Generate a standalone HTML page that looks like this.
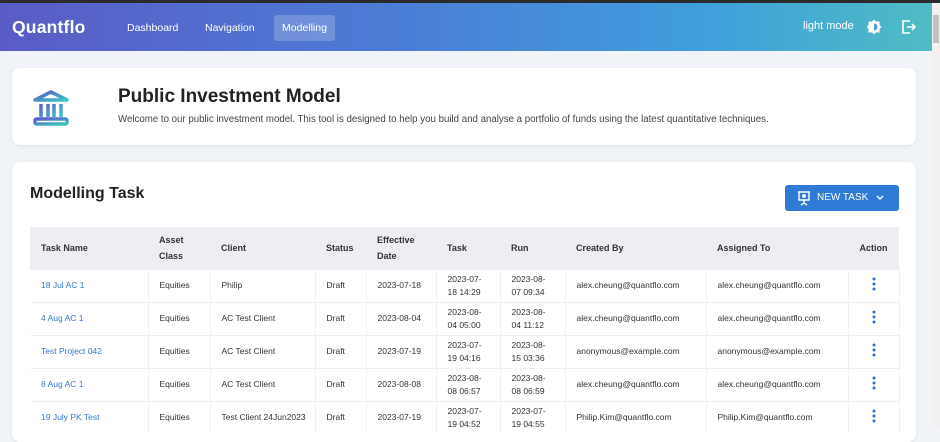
<!DOCTYPE html>
<html><head><style>
*{box-sizing:border-box;margin:0;padding:0}
body{width:940px;height:429px;overflow:hidden;background:#f0f3f8;font-family:"Liberation Sans",sans-serif;position:relative}
.top{position:absolute;left:0;top:0;width:940px;height:3px;background:#2b2b2b}
.nav{position:absolute;left:0;top:3px;width:932px;height:48px;background:linear-gradient(90deg,#5a5cc6 0%,#4a7fd6 45%,#3f9edd 75%,#4fbcc4 100%);color:#fff}
.logo{position:absolute;left:12px;top:14px;font-size:17.5px;font-weight:bold;letter-spacing:0.2px}
.nl{position:absolute;top:19px;font-size:10.5px}
.act{position:absolute;left:274px;top:12px;width:61px;height:26px;background:rgba(255,255,255,0.2);border-radius:3px}
.sb{position:absolute;left:932px;top:3px;width:8px;height:426px;background:#f1f1f1}
.sb div{position:absolute;left:1px;top:12px;width:6px;height:28px;background:#c1c1c1}
.card{position:absolute;left:12px;width:904px;background:#fff;border-radius:8px;box-shadow:0 1px 3px rgba(0,0,0,0.08)}
h1{position:absolute;left:118px;top:86px;font-size:19px;color:#222}
.sub{position:absolute;left:118px;top:114px;font-size:9.7px;color:#444}
h2{position:absolute;left:30px;top:185px;font-size:16px;color:#222}
.btn{position:absolute;left:785px;top:185px;width:114px;height:26px;background:#2f7ad5;border-radius:3px;color:#fff;font-size:10px}
table{position:absolute;left:30px;top:227px;border-collapse:collapse;font-size:8.5px;color:#333;table-layout:fixed}
th{background:#eceef1;height:42px;text-align:left;font-weight:bold;padding:0 8px 0 11px;line-height:16px;font-size:9px}
td{height:33px;padding:0 8px 0 11px;border-top:1px solid #eee;border-right:1px solid #f2f2f2;line-height:13px}
td a{color:#3579c9}
.dots{text-align:center;padding:0}
</style></head><body>
<div class="top"></div>
<div class="nav">
<div class="logo">Quantflo</div>
<div class="act"></div>
<div class="nl" style="left:127px">Dashboard</div>
<div class="nl" style="left:205px">Navigation</div>
<div class="nl" style="left:282px">Modelling</div>
<div class="nl" style="left:803px;top:17px;font-size:11px">light mode</div>
<svg style="position:absolute;left:866px;top:16px" width="16" height="16" viewBox="0 0 16 16"><path d="M8 0.5l2 2h3.5v3.5l2 2-2 2v3.5H10l-2 2-2-2H2.5V10l-2-2 2-2V2.5H6z" fill="#fff"/><path d="M8 4.5a3.5 3.5 0 0 1 0 7z" fill="#4a9fd8"/></svg>
<svg style="position:absolute;left:901px;top:17px" width="16" height="14" viewBox="0 0 16 14" fill="none" stroke="#fff" stroke-width="1.6"><path d="M8 2V1H2v12h6v-1"/><path d="M6 7h8M11 4l3 3-3 3"/></svg>
</div>
<div class="sb"><div></div></div>
<div class="card" style="top:68px;height:77px"></div>
<svg style="position:absolute;left:31px;top:88px" width="40" height="40" viewBox="0 0 40 40"><defs><linearGradient id="g" x1="0" y1="0" x2="1" y2="1"><stop offset="0" stop-color="#5b5bd0"/><stop offset="1" stop-color="#3cc4c0"/></linearGradient></defs><g fill="none" stroke="url(#g)" stroke-width="3.5"><path d="M4 12L20 4l16 8z" stroke-linejoin="round"/><path d="M10 16v13M17 16v13M23 16v13M30 16v13"/><rect x="4" y="31" width="32" height="5" rx="1.5"/></g></svg>
<h1>Public Investment Model</h1>
<div class="sub">Welcome to our public investment model. This tool is designed to help you build and analyse a portfolio of funds using the latest quantitative techniques.</div>
<div class="card" style="top:162px;height:280px"></div>
<h2>Modelling Task</h2>
<div class="btn"><svg style="position:absolute;left:12px;top:6px" width="14" height="15" viewBox="0 0 14 15" fill="none" stroke="#fff" stroke-width="1.4"><path d="M1 1h12M2 1v8h10V1M7 9v3M4 14l3-2 3 2"/><circle cx="7" cy="5" r="1.3" fill="#fff"/></svg><span style="position:absolute;left:32px;top:7px">NEW TASK</span><svg style="position:absolute;left:91px;top:10px" width="8" height="6" viewBox="0 0 8 6" fill="none" stroke="#fff" stroke-width="1.4"><path d="M1 1l3 3 3-3"/></svg></div>
<table>
<colgroup><col style="width:118px"><col style="width:62px"><col style="width:105px"><col style="width:51px"><col style="width:70px"><col style="width:64px"><col style="width:65px"><col style="width:141px"><col style="width:142px"><col style="width:51px"></colgroup>
<tr><th>Task Name</th><th>Asset<br>Class</th><th>Client</th><th>Status</th><th>Effective<br>Date</th><th>Task</th><th>Run</th><th>Created By</th><th>Assigned To</th><th style="text-align:center;padding:0">Action</th></tr>
<tr><td><a>18 Jul AC 1</a></td><td>Equities</td><td>Philip</td><td>Draft</td><td>2023-07-18</td><td>2023-07-<br>18 14:29</td><td>2023-08-<br>07 09:34</td><td>alex.cheung@quantflo.com</td><td>alex.cheung@quantflo.com</td><td class="dots"><svg width="4" height="14" viewBox="0 0 4 14" fill="#2f6fc9"><circle cx="2" cy="2" r="1.5"/><circle cx="2" cy="7" r="1.5"/><circle cx="2" cy="12" r="1.5"/></svg></td></tr>
<tr><td><a>4 Aug AC 1</a></td><td>Equities</td><td>AC Test Client</td><td>Draft</td><td>2023-08-04</td><td>2023-08-<br>04 05:00</td><td>2023-08-<br>04 11:12</td><td>alex.cheung@quantflo.com</td><td>alex.cheung@quantflo.com</td><td class="dots"><svg width="4" height="14" viewBox="0 0 4 14" fill="#2f6fc9"><circle cx="2" cy="2" r="1.5"/><circle cx="2" cy="7" r="1.5"/><circle cx="2" cy="12" r="1.5"/></svg></td></tr>
<tr><td><a>Test Project 042</a></td><td>Equities</td><td>AC Test Client</td><td>Draft</td><td>2023-07-19</td><td>2023-07-<br>19 04:16</td><td>2023-08-<br>15 03:36</td><td>anonymous@example.com</td><td>anonymous@example.com</td><td class="dots"><svg width="4" height="14" viewBox="0 0 4 14" fill="#2f6fc9"><circle cx="2" cy="2" r="1.5"/><circle cx="2" cy="7" r="1.5"/><circle cx="2" cy="12" r="1.5"/></svg></td></tr>
<tr><td><a>8 Aug AC 1</a></td><td>Equities</td><td>AC Test Client</td><td>Draft</td><td>2023-08-08</td><td>2023-08-<br>08 06:57</td><td>2023-08-<br>08 06:59</td><td>alex.cheung@quantflo.com</td><td>alex.cheung@quantflo.com</td><td class="dots"><svg width="4" height="14" viewBox="0 0 4 14" fill="#2f6fc9"><circle cx="2" cy="2" r="1.5"/><circle cx="2" cy="7" r="1.5"/><circle cx="2" cy="12" r="1.5"/></svg></td></tr>
<tr><td><a>19 July PK Test</a></td><td>Equities</td><td>Test Client 24Jun2023</td><td>Draft</td><td>2023-07-19</td><td>2023-07-<br>19 04:52</td><td>2023-07-<br>19 04:55</td><td>Philip.Kim@quantflo.com</td><td>Philip.Kim@quantflo.com</td><td class="dots"><svg width="4" height="14" viewBox="0 0 4 14" fill="#2f6fc9"><circle cx="2" cy="2" r="1.5"/><circle cx="2" cy="7" r="1.5"/><circle cx="2" cy="12" r="1.5"/></svg></td></tr>
</table>
</body></html>
